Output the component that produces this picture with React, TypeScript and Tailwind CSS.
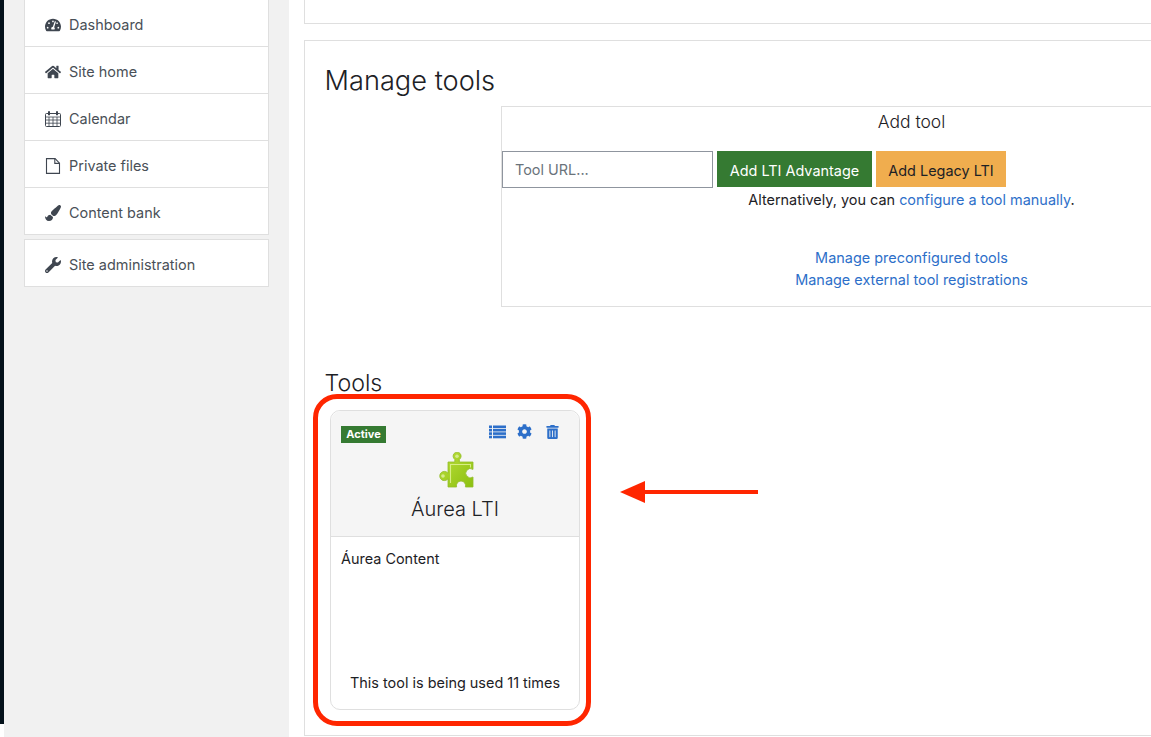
import React from "react";
import { FaTachometerAlt, FaHome, FaPaintBrush, FaWrench, FaCog, FaTrashAlt } from "react-icons/fa";

const font = "font-['Inter','Liberation_Sans',sans-serif]";

function CalendarIcon({ className }: { className?: string }) {
  return (
    <svg viewBox="0 0 16 16" className={className} fill="none" stroke="currentColor">
      <rect x="0.5" y="2.5" width="15" height="13" rx="1" strokeWidth="1" />
      <path d="M0.5 6h15M0.5 9h15M0.5 12.2h15M4 6v9.5M8 6v9.5M12 6v9.5" strokeWidth="0.8" />
      <path d="M4 0.3v4M12 0.3v4" strokeWidth="2" />
    </svg>
  );
}

function FileIcon({ className }: { className?: string }) {
  return (
    <svg viewBox="0 0 16 16" className={className} fill="none" stroke="currentColor" strokeWidth="1.1">
      <path d="M1.5 0.6h8.6l4.4 4.6v10.2h-13z" />
      <path d="M9.8 0.8v4.6h4.6" />
    </svg>
  );
}

const items: [React.ComponentType<{ className?: string }>, string][] = [
  [FaTachometerAlt, "Dashboard"],
  [FaHome, "Site home"],
  [CalendarIcon, "Calendar"],
  [FileIcon, "Private files"],
  [FaPaintBrush, "Content bank"],
];

function Row({ Icon, label, last }: { Icon: React.ComponentType<{ className?: string }>; label: string; last?: boolean }) {
  return (
    <div className={`flex items-center pl-[20px] pt-[3px] text-[14.45px] text-[#495057] ${last ? "h-[46px]" : "h-[47px] border-b border-[#dfdfdf]"}`}>
      <span className="flex w-[24px] shrink-0"><Icon className="h-[16px] w-[16px] text-[#3f4650]" /></span>
      {label}
    </div>
  );
}

function ListIcon() {
  return (
    <svg viewBox="0 0 17 14" className="h-[14px] w-[17px] fill-[#2d6fc9]">
      <rect x="0" y="0.5" width="3" height="2.6" /><rect x="4" y="0.5" width="13" height="2.6" />
      <rect x="0" y="3.9" width="3" height="2.6" /><rect x="4" y="3.9" width="13" height="2.6" />
      <rect x="0" y="7.3" width="3" height="2.6" /><rect x="4" y="7.3" width="13" height="2.6" />
      <rect x="0" y="10.7" width="3" height="2.6" /><rect x="4" y="10.7" width="13" height="2.6" />
    </svg>
  );
}

function Puzzle() {
  return (
    <svg viewBox="0 0 36 36" className="h-[36px] w-[36px]">
      <defs>
        <linearGradient id="pz" x1="0" y1="0" x2="1" y2="1">
          <stop offset="0" stopColor="#bcdf3c" />
          <stop offset="1" stopColor="#8cc010" />
        </linearGradient>
      </defs>
      <path
        d="M10 10h6.8V7.4a4 4 0 1 1 4.6 0V10H35v7.4a4.6 4.6 0 1 0 0 7.6V35H27.4a4.6 4.6 0 1 0-8.8 0H10v-8.2a4.6 4.6 0 1 1 0-5.6z"
        fill="url(#pz)"
        stroke="#93bd2a"
        strokeWidth="0.8"
      />
      <circle cx="19" cy="4.2" r="1.8" fill="#d6ec8c" />
      <circle cx="5" cy="24" r="1.8" fill="#d6ec8c" />
      <path d="M12.5 31V12.5h20v3" fill="none" stroke="#d7ee85" strokeWidth="1.1" />
    </svg>
  );
}

export default function App() {
  return (
    <div className={`relative flex h-[737px] w-[1151px] overflow-hidden bg-white text-[#1d2125] ${font}`}>
      <div className="flex w-[4px] shrink-0 flex-col">
        <div className="h-[724px] bg-[#04121b]" />
      </div>

      <aside className="w-[285px] shrink-0 bg-[#f1f1f1] px-[20px]">
        <div className="border border-t-0 border-[#dfdfdf] bg-white">
          {items.map(([Icon, label], i) => (
            <Row key={label} Icon={Icon} label={label} last={i === items.length - 1} />
          ))}
        </div>
        <div className="mt-[4px] border border-[#dfdfdf] bg-white">
          <Row Icon={FaWrench} label="Site administration" last />
        </div>
      </aside>

      <main className="ml-[15px] flex min-w-0 flex-1 flex-col">
        <div className="h-[24px] shrink-0 border-b border-l border-[#dfdfdf]" />
        <section className="mt-[16px] h-[696px] shrink-0 border border-r-0 border-[#dfdfdf] pl-[20px]">
          <h2 className="-ml-[0.5px] mt-[22px] text-[27.2px] font-light leading-[36px]">Manage tools</h2>

          <div className="ml-[176px] mt-[7px] h-[201px] border border-r-0 border-[#dfdfdf]">
            <div className="w-[819px] text-center">
              <div className="mt-[3px] text-[17.5px] font-light leading-[24px]">Add tool</div>
            </div>
            <div className="mt-[17px] flex gap-[4px] text-[14.45px]">
              <div className="flex h-[37px] w-[211px] items-center border border-[#8f959e] pl-[12px] pt-[1px] text-[#6a737b]">Tool URL...</div>
              <div className="flex h-[36px] w-[155px] items-center justify-center bg-[#357a32] pt-[3px] text-white">Add LTI Advantage</div>
              <div className="flex h-[36px] w-[130px] items-center justify-center bg-[#f0ad4e] pt-[3px] text-[#1d2125]">Add Legacy LTI</div>
            </div>
            <div className="w-[819px] pt-[1px] text-center text-[14.45px] leading-[22px]">
              <p>Alternatively, you can <span className="text-[#2d6fc9]">configure a tool manually</span>.</p>
              <p className="mt-[36px] text-[#2d6fc9]">Manage preconfigured tools</p>
              <p className="text-[#2d6fc9]">Manage external tool registrations</p>
            </div>
          </div>

          <h3 className="-ml-[0.5px] mt-[60px] text-[23.2px] font-light leading-[32px]">Tools</h3>

          <div className="ml-[5px] mt-[11px] flex h-[300px] w-[250px] flex-col rounded-[10px] border border-[#dfdfdf]">
            <div className="h-[126px] shrink-0 rounded-t-[10px] border-b border-[#dfdfdf] bg-[#f5f5f5]">
              <div className="flex items-start justify-between pl-[10px] pr-[20px] pt-[14px]">
                <span className="mt-[1px] flex h-[17px] w-[45px] items-center justify-center bg-[#357a32] text-[11px] font-bold text-white">Active</span>
                <div className="-mt-[1px] flex items-center gap-[11px]">
                  <ListIcon />
                  <FaCog className="h-[15px] w-[15px] text-[#2d6fc9]" />
                  <FaTrashAlt className="ml-[3px] h-[14px] w-[13px] text-[#2d6fc9]" />
                </div>
              </div>
              <div className="mt-[9px] flex justify-center pl-[1px]"><Puzzle /></div>
              <div className="mt-[7px] text-center text-[20px] font-light leading-[28px]">Áurea LTI</div>
            </div>
            <div className="flex flex-1 flex-col justify-between px-[10px] pb-[15px] pt-[11px] text-[14.45px] leading-[22px]">
              <div>Áurea Content</div>
              <div className="text-center">This tool is being used 11 times</div>
            </div>
          </div>
        </section>
      </main>

      <div className="absolute left-[313px] top-[394px] h-[332px] w-[278px] rounded-[24px] border-[5px] border-[#ff2600]" />
      <svg className="absolute left-[618px] top-[478px]" width="142" height="28" viewBox="0 0 142 28">
        <rect x="20" y="12" width="120" height="4" fill="#ff2600" />
        <path d="M2 14 L27 3 V25 Z" fill="#ff2600" />
      </svg>
    </div>
  );
}
